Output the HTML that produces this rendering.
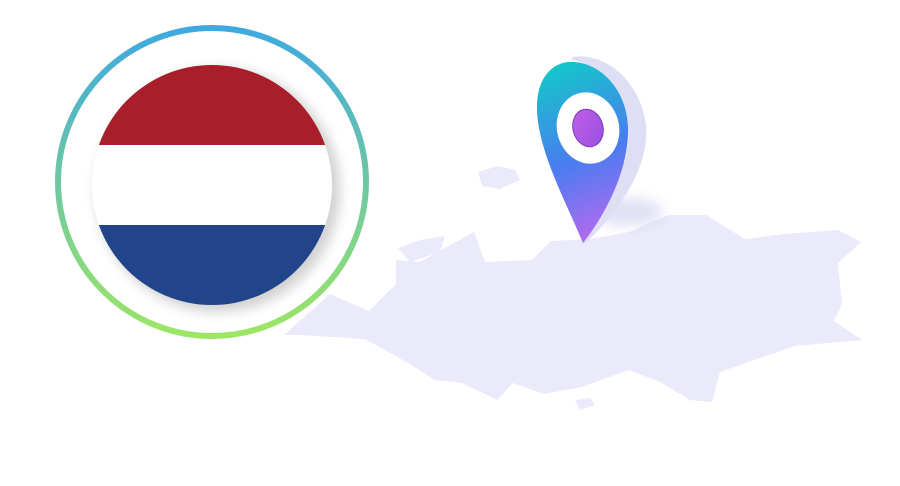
<!DOCTYPE html>
<html><head><style>
html,body{margin:0;padding:0;background:#fff;width:900px;height:486px;overflow:hidden}
</style></head><body>
<svg width="900" height="486" viewBox="0 0 900 486" xmlns="http://www.w3.org/2000/svg">
<defs>
<linearGradient id="ring" x1="0" y1="0" x2="0" y2="1">
<stop offset="0" stop-color="#3ea9e0"/><stop offset="1" stop-color="#9de664"/></linearGradient>
<linearGradient id="pin" x1="0.3" y1="0" x2="0.5" y2="1">
<stop offset="0" stop-color="#13c7c9"/><stop offset="0.55" stop-color="#4a7cf0"/><stop offset="1" stop-color="#b46af0"/></linearGradient>
<linearGradient id="dot" x1="0" y1="0" x2="1" y2="1">
<stop offset="0" stop-color="#c05ee8"/><stop offset="1" stop-color="#9a50e0"/></linearGradient>
<filter id="sh" x="-30%" y="-30%" width="160%" height="160%"><feGaussianBlur stdDeviation="6"/></filter>
<clipPath id="fc"><circle cx="212" cy="185" r="120"/></clipPath>
</defs>
<g fill="#eaeafa">
<path d="M532,260 L551,241 L590,239 L629,232 L668,215 L706,215 L745,239 L784,234 L838,230 L861,242 L838,263 L842,304 L834,321 L862,340 L795,346 L757,359 L720,372 L712,402 L690,400 L660,382 L629,370 L582,387 L544,394 L513,383 L497,400 L462,383 L435,380 L408,363 L365,339 L300,335 L284,335 L330,294 L369,311 L396,284 L396,260 L420,262 L443,249 L474,232 L485,262 Z"/>
<path d="M398,248 L420,240 L445,236 L440,252 L410,262 Z"/>
<path d="M478,172 L498,166 L515,170 L520,180 L500,189 L482,186 Z"/>
<path d="M575,400 L590,398 L595,405 L580,410 Z"/>
</g>
<circle cx="212" cy="182" r="154" fill="none" stroke="url(#ring)" stroke-width="6"/>
<circle cx="218" cy="190" r="122" fill="#000" opacity="0.18" filter="url(#sh)"/>
<g clip-path="url(#fc)">
<rect x="90" y="60" width="250" height="85" fill="#a81e2a"/>
<rect x="90" y="145" width="250" height="80" fill="#ffffff"/>
<rect x="90" y="225" width="250" height="85" fill="#21448a"/>
</g>
<ellipse cx="628" cy="212" rx="35" ry="14" fill="#c8c8ee" opacity="0.55" filter="url(#sh)"/>
<path d="M572,57 C605,52 640,80 646,125 C650,170 615,215 586,243 L583,243 C605,205 632,165 628,125 C624,90 600,65 572,60 Z" fill="#dedef5"/>
<path d="M583,243 C565,200 538,150 537,110 C536,75 555,60 575,62 C605,65 630,95 628,135 C626,175 605,215 583,243 Z" fill="url(#pin)"/>
<ellipse cx="588" cy="128" rx="31" ry="36" transform="rotate(-15 588 128)" fill="#fff"/>
<ellipse cx="588" cy="128" rx="15" ry="19" transform="rotate(-15 588 128)" fill="url(#dot)" stroke="#7a3cb8" stroke-width="1"/>
</svg>
</body></html>
